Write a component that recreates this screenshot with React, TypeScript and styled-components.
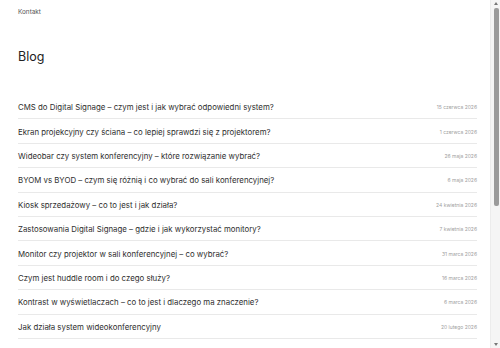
import { createGlobalStyle, styled } from "styled-components";

const GlobalStyle = createGlobalStyle`
    html, body {
        margin:0;
        padding:0;
        background:#fff;
    }
    body {
        font-family: Inter, "Noto Sans", sans-serif;
        color:#2b2b2b;
    }
`

const Page = styled.div`
    padding:0 23px 240px 18px;
`
const Nav = styled.nav`
    height:24px;
    display:flex;
    align-items:center;
    a{
        font-size:6.4px;
        color:#555;
        text-decoration:none;
    }
`
const Title = styled.h1`
    margin:0;
    padding-top:24px;
    height:71px;
    box-sizing:border-box;
    font-size:12.5px;
    font-weight:400;
    color:#222;
    line-height:18px;
`
const PostList = styled.ul`
    margin:0;
    padding:0;
    list-style:none;
`
const Post = styled.li`
    display:flex;
    align-items:center;
    justify-content:space-between;
    height:24.4px;
    box-sizing:border-box;
    border-bottom:1px solid #e9e9e9;
    padding-top:1px;
`
const PostTitle = styled.a`
    font-size:7.85px;
    color:#2e2e2e;
    text-decoration:none;
`
const PostDate = styled.span`
    font-size:5px;
    color:#a0a0a0;
`
// browser scrollbar, drawn over the right edge of the page
const ScrollTrack = styled.div`
    position:fixed;
    top:0;
    right:0;
    width:10px;
    height:100vh;
    box-sizing:border-box;
    padding:2px 1px 2px 0;
    display:flex;
    flex-direction:column;
    align-items:flex-end;
    background:#f5f5f5;
    border-left:1px solid #ececec;
`
const ScrollThumb = styled.div`
    width:5px;
    height:198px;
    margin-top:3px;
    border-radius:2px;
    background:#9b9b9b;
`
const Spacer = styled.div`
    flex:1;
`
const Arrow = styled.div<{ $down?: boolean }>`
    width:0;
    height:0;
    margin-right:1px;
    border-left:2px solid transparent;
    border-right:2px solid transparent;
    ${props => props.$down ? "border-top:3px solid #777;" : "border-bottom:3px solid #777;"}
`

interface IPost {
    title: string,
    date: string,
}

const posts: IPost[] = [
    { title: "CMS do Digital Signage – czym jest i jak wybrać odpowiedni system?", date: "15 czerwca 2026" },
    { title: "Ekran projekcyjny czy ściana – co lepiej sprawdzi się z projektorem?", date: "1 czerwca 2026" },
    { title: "Wideobar czy system konferencyjny – które rozwiązanie wybrać?", date: "26 maja 2026" },
    { title: "BYOM vs BYOD – czym się różnią i co wybrać do sali konferencyjnej?", date: "6 maja 2026" },
    { title: "Kiosk sprzedażowy – co to jest i jak działa?", date: "24 kwietnia 2026" },
    { title: "Zastosowania Digital Signage – gdzie i jak wykorzystać monitory?", date: "7 kwietnia 2026" },
    { title: "Monitor czy projektor w sali konferencyjnej – co wybrać?", date: "31 marca 2026" },
    { title: "Czym jest huddle room i do czego służy?", date: "16 marca 2026" },
    { title: "Kontrast w wyświetlaczach – co to jest i dlaczego ma znaczenie?", date: "6 marca 2026" },
    { title: "Jak działa system wideokonferencyjny", date: "20 lutego 2026" },
]

function App(){
    return (
        <>
            <GlobalStyle />
            <Page>
                <Nav>
                    <a href="#">Kontakt</a>
                </Nav>
                <Title>Blog</Title>
                <PostList>
                    {posts.map((post)=>(
                        <Post key={post.title}>
                            <PostTitle href="#">{post.title}</PostTitle>
                            <PostDate>{post.date}</PostDate>
                        </Post>
                    ))}
                </PostList>
            </Page>
            <ScrollTrack>
                <Arrow />
                <ScrollThumb />
                <Spacer />
                <Arrow $down />
            </ScrollTrack>
        </>
    )
}

export default App;
